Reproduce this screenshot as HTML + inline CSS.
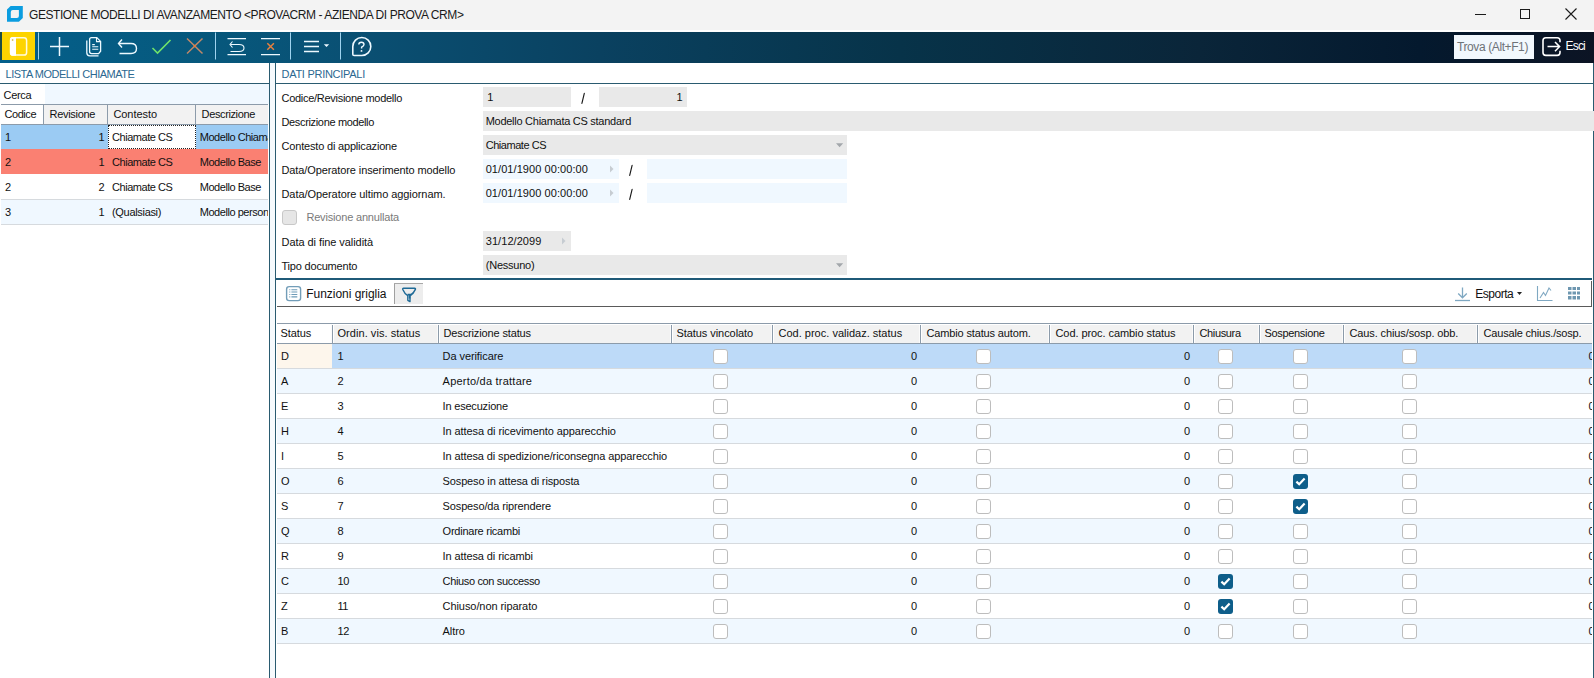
<!DOCTYPE html>
<html><head><meta charset="utf-8">
<style>
*{box-sizing:border-box;margin:0;padding:0}
html,body{width:1594px;height:678px;overflow:hidden;background:#fff;font-family:"Liberation Sans",sans-serif;font-size:11px;color:#111}
body{position:relative}
.a{position:absolute;white-space:nowrap}
.cb{position:absolute;width:15px;height:15px;border:1px solid #bdbdbd;border-radius:3px;background:#fff}
</style></head><body>
<div class="a" style="left:0;top:0;width:1594px;height:30px;background:#f3f3f3"></div>
<div class="a" style="left:0;top:30px;width:1594px;height:2px;background:#fff"></div>
<svg class="a" style="left:0;top:0" width="40" height="30" viewBox="0 0 40 30">
<path d="M10.6 6H22.8V17.9L18.9 21.8H7V9.6Z" fill="#0b9de0"/>
<path d="M12.8 10H18.9V15.9Q18.9 17.9 16.9 17.9H10.8V12Q10.8 10 12.8 10Z" fill="#f3f3f3"/></svg>
<div class="a" style="left:1475px;top:14px;width:11px;height:1px;background:#1a1a1a"></div>
<div class="a" style="left:1520px;top:9px;width:10px;height:10px;border:1px solid #1a1a1a"></div>
<svg class="a" style="left:1565px;top:8px" width="12" height="12" viewBox="0 0 12 12"><path d="M0.5 0.5L11.5 11.5M11.5 0.5L0.5 11.5" stroke="#1a1a1a" stroke-width="1.1"/></svg>
<div class="a" style="left:0;top:32px;width:1594px;height:31px;background:linear-gradient(90deg,#045f8b 0px,#065a7f 170px,#0a4f72 370px,#0a4160 600px,#073349 900px,#0a2539 1200px,#04192e 1420px,#0c1424 1594px)"></div>
<div class="a" style="left:0;top:32px;width:2px;height:28px;background:#1d4c46"></div>
<div class="a" style="left:2px;top:32px;width:32.6px;height:28px;background:#fdd400"></div>
<svg class="a" style="left:0;top:0" width="1594" height="70" viewBox="0 0 1594 70">
 <rect x="10.6" y="37.8" width="16" height="17.2" rx="2.6" fill="none" stroke="#fffbe0" stroke-width="1.5"/>
 <path d="M16 37.1V55.7H12.5Q9.9 55.7 9.9 53.1V39.7Q9.9 37.1 12.5 37.1Z" fill="#fff"/>
 <circle cx="12.6" cy="40" r="0.9" fill="#d8c060"/>
 <rect x="38" y="32.5" width="1" height="27" fill="#9fd3ef"/>
 <rect x="215" y="32.5" width="1" height="27" fill="#9fd3ef"/>
 <rect x="290" y="32.5" width="1" height="27" fill="#9fd3ef"/>
 <rect x="340" y="32.5" width="1" height="27" fill="#9fd3ef"/>
 <path d="M50 46.5H69M59.5 37V56" stroke="#eef9ff" stroke-width="1.5"/>
 <path d="M86.8 40.5V52.8Q86.8 55.8 89.8 55.8H98.5" fill="none" stroke="#eef9ff" stroke-width="1.3"/>
 <path d="M91.5 37.6H96.8L100.6 41.4V51.2L98.6 53.6H91.6Q89.6 53.6 89.6 51.6V39.6Q89.6 37.6 91.5 37.6Z" fill="none" stroke="#eef9ff" stroke-width="1.3"/>
 <path d="M96.5 37.8V41.6H100.4" fill="none" stroke="#eef9ff" stroke-width="1.1"/>
 <path d="M92.2 44.6H94.8M92.2 46.8H98.3M92.2 49.2H98.3" stroke="#eef9ff" stroke-width="1.1"/>
 <path d="M122 39.5L118.5 43.5L122 47.5" fill="none" stroke="#eef9ff" stroke-width="1.4"/>
 <path d="M119 43.5H131Q136.5 43.5 136.5 48.5Q136.5 53.5 131 53.5H119.5" fill="none" stroke="#eef9ff" stroke-width="1.4"/>
 <path d="M152.5 48L157.5 53L170.5 40" fill="none" stroke="#6fe36a" stroke-width="1.6"/>
 <path d="M187 38.5L202.5 53.5M202.5 38.5L187 53.5" stroke="#c08868" stroke-width="1.5"/>
 <circle cx="194.8" cy="46" r="1.2" fill="#e87a3a"/>
 <path d="M227.5 38.6H246M227.5 54.6H246" stroke="#eef9ff" stroke-width="1.4"/>
 <path d="M232.5 41.5L230 44.5L232.5 47.5" fill="none" stroke="#eef9ff" stroke-width="1.1"/>
 <path d="M230.5 44.5H239Q244 44.5 244 48Q244 51.5 239 51.5H230.5" fill="none" stroke="#eef9ff" stroke-width="1.1"/>
 <path d="M261 38.6H280M261 54.6H280" stroke="#eef9ff" stroke-width="1.4"/>
 <path d="M267.3 43.2L273.9 49.8M273.9 43.2L267.3 49.8" stroke="#e8803e" stroke-width="1.5"/>
 <path d="M304 41.5H319M304 46.5H319M304 51.5H319" stroke="#eef9ff" stroke-width="1.3"/>
 <path d="M323.8 44.2H329.2L326.5 47Z" fill="#eef9ff"/>
 <path d="M352.8 54.2V46.5A9 9 0 1 1 361.8 55.5H354.1Q352.8 55.5 352.8 54.2Z" fill="none" stroke="#eef9ff" stroke-width="1.6"/>
 <path d="M358.8 44.6Q358.8 42.2 361.4 42.2Q364 42.2 364 44.6Q364 46 361.6 47.2V48.6" fill="none" stroke="#eef9ff" stroke-width="1.4"/>
 <circle cx="361.5" cy="50.9" r="0.95" fill="#eef9ff"/>
 <path d="M1560 42.3V40.6Q1560 37.8 1557.2 37.8H1545.8Q1543 37.8 1543 40.6V52.6Q1543 55.4 1545.8 55.4H1557.2Q1560 55.4 1560 52.6V50.8" fill="none" stroke="#fff" stroke-width="1.6"/>
 <path d="M1547.5 46.6H1559.5M1555 42L1559.6 46.6L1555 51.2" fill="none" stroke="#fff" stroke-width="1.5"/>
</svg>
<div class="a" style="left:1454px;top:35px;width:80px;height:24px;background:#f2f8fd"></div>
<div class="a" style="left:269px;top:63px;width:1px;height:615px;background:#2a5b70"></div>
<div class="a" style="left:270px;top:63px;width:5px;height:615px;background:#f6fafd"></div>
<div class="a" style="left:275px;top:63px;width:1px;height:615px;background:#2a5b70"></div>
<div class="a" style="left:1593px;top:63px;width:1px;height:615px;background:#2a5b70"></div>
<div class="a" style="left:0;top:83px;width:269px;height:1px;background:#2a5b70"></div>
<div class="a" style="left:45px;top:84px;width:224px;height:20px;background:#f0f8ff"></div>
<div class="a" style="left:1px;top:104px;width:267px;height:1px;background:#8c9baa"></div>
<div class="a" style="left:44px;top:105px;width:224px;height:19px;background:#f2f2f2"></div>
<div class="a" style="left:43px;top:105px;width:1px;height:19px;background:#8c9baa"></div>
<div class="a" style="left:107px;top:105px;width:1px;height:19px;background:#8c9baa"></div>
<div class="a" style="left:195px;top:105px;width:1px;height:19px;background:#8c9baa"></div>
<div class="a" style="left:1px;top:124px;width:267px;height:1px;background:#8c9baa"></div>
<div class="a" style="left:1px;top:125px;width:267px;height:24px;background:#9bcbf3"></div>
<div class="a" style="left:108px;top:125px;width:88px;height:24px;background:#fff;border:1px dotted #222"></div>
<div class="a" style="left:1px;top:149px;width:267px;height:25px;background:#fa8072"></div>
<div class="a" style="left:1px;top:199px;width:267px;height:25px;background:#f0f8ff"></div>
<div class="a" style="left:1px;top:199px;width:267px;height:1px;background:#d6dade"></div>
<div class="a" style="left:1px;top:224px;width:267px;height:1px;background:#d6dade"></div>
<div class="a" style="left:276px;top:83px;width:1318px;height:1px;background:#2a5b70"></div>
<div class="a" style="left:282px;top:210px;width:15px;height:15px;border:1px solid #c8c8c8;border-radius:3px;background:#e6e6e6"></div>
<div class="a" style="left:483px;top:87px;width:88px;height:20px;background:#e9e9e9"></div>
<div class="a" style="left:599px;top:87px;width:88px;height:20px;background:#e9e9e9"></div>
<div class="a" style="left:483px;top:111px;width:1111px;height:20px;background:#e9e9e9"></div>
<div class="a" style="left:483px;top:135px;width:364px;height:20px;background:#e9e9e9"></div>
<div class="a" style="left:483px;top:159px;width:136px;height:20px;background:#f0f8ff"></div>
<div class="a" style="left:647px;top:159px;width:200px;height:20px;background:#f0f8ff"></div>
<div class="a" style="left:483px;top:183px;width:136px;height:20px;background:#f0f8ff"></div>
<div class="a" style="left:647px;top:183px;width:200px;height:20px;background:#f0f8ff"></div>
<div class="a" style="left:483px;top:231px;width:88px;height:20px;background:#e9e9e9"></div>
<div class="a" style="left:483px;top:255px;width:364px;height:20px;background:#e9e9e9"></div>
<svg class="a" style="left:0;top:0" width="1594" height="300" viewBox="0 0 1594 300">
 <path d="M581.9 103.4L584.3 93.3M629.7 175.4L632.1 165.3M629.7 199.4L632.1 189.3" stroke="#1a1a1a" stroke-width="1.15" stroke-linecap="round"/>
 <path d="M610 165.5L613.5 169L610 172.5Z" fill="#c6ccd2"/>
 <path d="M610 189.5L613.5 193L610 196.5Z" fill="#c6ccd2"/>
 <path d="M562 237.5L565.5 241L562 244.5Z" fill="#c6ccd2"/>
 <path d="M836 143.3H843.2L839.6 147.2Z" fill="#a3a7ab"/>
 <path d="M836 263.3H843.2L839.6 267.2Z" fill="#a3a7ab"/>
</svg>
<div class="a" style="left:276px;top:278px;width:1316px;height:2px;background:#1f5a78"></div>
<svg class="a" style="left:0;top:0" width="1594" height="678" viewBox="0 0 1594 678">
 <rect x="286.6" y="286.6" width="14" height="14" rx="2.6" fill="#fff" stroke="#729db8" stroke-width="1.4"/>
 <path d="M289.3 289.7H290.3M289.3 292H290.3M289.3 294.5H290.3M289.3 296.9H290.3M291.4 289.7H297.3M291.4 292H297.3M291.4 294.5H297.3M291.4 296.9H297.3" stroke="#6f9cb8" stroke-width="1.1"/>
 <rect x="394" y="283" width="29" height="21" fill="#ededed"/>
 <rect x="394" y="283" width="1" height="21" fill="#a0a0a0"/>
 <rect x="394" y="283" width="29" height="1" fill="#a8a8a8"/>
 <path d="M403.5 288.2Q402.4 288.2 402.8 289.4Q404.5 293.6 407.8 295.6V300.3L410 301.6V295.6Q413.6 293.6 415.4 289.4Q415.8 288.2 414.7 288.2Z" fill="none" stroke="#1f6a96" stroke-width="1.4" stroke-linejoin="round"/>
 <path d="M407.6 294.6H411.6M409.6 294.6V298.6" stroke="#1f6a96" stroke-width="1.6"/>
 <path d="M1462.5 287.5V297.5M1458.2 293.5L1462.5 297.8L1466.8 293.5" fill="none" stroke="#7fa8c2" stroke-width="1.3"/>
 <path d="M1455 300.5H1470" stroke="#7fa8c2" stroke-width="1.3"/>
 <path d="M1517 292H1522L1519.5 295Z" fill="#222"/>
 <path d="M1537.5 286V300.5H1552.5" fill="none" stroke="#7fa8c2" stroke-width="1.1"/>
 <path d="M1540 298L1543.5 292.5L1545.5 295.5L1549 288L1551 290.5" fill="none" stroke="#7fa8c2" stroke-width="1.1"/>
 <path d="M1568 287h3.5v3h-3.5zM1572.5 287h3.5v3h-3.5zM1577 287h3v3h-3zM1568 291.5h3.5v3h-3.5zM1572.5 291.5h3.5v3h-3.5zM1577 291.5h3v3h-3zM1568 296h3.5v3.5h-3.5zM1572.5 296h3.5v3.5h-3.5zM1577 296h3v3.5h-3z" fill="#6e97b0"/>
</svg>
<div class="a" style="left:277px;top:306px;width:1315px;height:1px;background:#5a5a5a"></div>
<div class="a" style="left:1591px;top:281px;width:1px;height:26px;background:#5a5a5a"></div>
<div class="a" style="left:277px;top:323px;width:1315px;height:1px;background:#8c9baa"></div>
<div class="a" style="left:332px;top:324px;width:1260px;height:19px;background:#f2f2f2"></div>
<div class="a" style="left:277px;top:343px;width:1315px;height:1px;background:#8c9baa"></div>
<div class="a" style="left:332px;top:324px;width:1px;height:19px;background:#8c9baa"></div>
<div class="a" style="left:333px;top:324px;width:1px;height:19px;background:#fff"></div>
<div class="a" style="left:331px;top:324px;width:1px;height:19px;background:#fbfbfb"></div>
<div class="a" style="left:438px;top:324px;width:1px;height:19px;background:#8c9baa"></div>
<div class="a" style="left:439px;top:324px;width:1px;height:19px;background:#fff"></div>
<div class="a" style="left:437px;top:324px;width:1px;height:19px;background:#fbfbfb"></div>
<div class="a" style="left:671px;top:324px;width:1px;height:19px;background:#8c9baa"></div>
<div class="a" style="left:672px;top:324px;width:1px;height:19px;background:#fff"></div>
<div class="a" style="left:670px;top:324px;width:1px;height:19px;background:#fbfbfb"></div>
<div class="a" style="left:772px;top:324px;width:1px;height:19px;background:#8c9baa"></div>
<div class="a" style="left:773px;top:324px;width:1px;height:19px;background:#fff"></div>
<div class="a" style="left:771px;top:324px;width:1px;height:19px;background:#fbfbfb"></div>
<div class="a" style="left:920px;top:324px;width:1px;height:19px;background:#8c9baa"></div>
<div class="a" style="left:921px;top:324px;width:1px;height:19px;background:#fff"></div>
<div class="a" style="left:919px;top:324px;width:1px;height:19px;background:#fbfbfb"></div>
<div class="a" style="left:1049px;top:324px;width:1px;height:19px;background:#8c9baa"></div>
<div class="a" style="left:1050px;top:324px;width:1px;height:19px;background:#fff"></div>
<div class="a" style="left:1048px;top:324px;width:1px;height:19px;background:#fbfbfb"></div>
<div class="a" style="left:1193px;top:324px;width:1px;height:19px;background:#8c9baa"></div>
<div class="a" style="left:1194px;top:324px;width:1px;height:19px;background:#fff"></div>
<div class="a" style="left:1192px;top:324px;width:1px;height:19px;background:#fbfbfb"></div>
<div class="a" style="left:1259px;top:324px;width:1px;height:19px;background:#8c9baa"></div>
<div class="a" style="left:1260px;top:324px;width:1px;height:19px;background:#fff"></div>
<div class="a" style="left:1258px;top:324px;width:1px;height:19px;background:#fbfbfb"></div>
<div class="a" style="left:1343px;top:324px;width:1px;height:19px;background:#8c9baa"></div>
<div class="a" style="left:1344px;top:324px;width:1px;height:19px;background:#fff"></div>
<div class="a" style="left:1342px;top:324px;width:1px;height:19px;background:#fbfbfb"></div>
<div class="a" style="left:1477px;top:324px;width:1px;height:19px;background:#8c9baa"></div>
<div class="a" style="left:1478px;top:324px;width:1px;height:19px;background:#fff"></div>
<div class="a" style="left:1476px;top:324px;width:1px;height:19px;background:#fbfbfb"></div>
<div class="a" style="left:332px;top:324px;width:1260px;height:1px;background:#fff"></div>
<div class="a" style="left:277px;top:344px;width:55px;height:24px;background:#fdf6ec"></div>
<div class="a" style="left:332px;top:344px;width:1260px;height:24px;background:#bddaf8"></div>
<div class="a" style="left:277px;top:368px;width:1315px;height:1px;background:#d6dade"></div>
<div class="cb" style="left:713px;top:349px"></div>
<div class="cb" style="left:976px;top:349px"></div>
<div class="cb" style="left:1218px;top:349px"></div>
<div class="cb" style="left:1293px;top:349px"></div>
<div class="cb" style="left:1402px;top:349px"></div>
<div class="a" style="left:277px;top:369px;width:1315px;height:24px;background:#f0f8ff"></div>
<div class="a" style="left:277px;top:393px;width:1315px;height:1px;background:#d6dade"></div>
<div class="cb" style="left:713px;top:374px"></div>
<div class="cb" style="left:976px;top:374px"></div>
<div class="cb" style="left:1218px;top:374px"></div>
<div class="cb" style="left:1293px;top:374px"></div>
<div class="cb" style="left:1402px;top:374px"></div>
<div class="a" style="left:277px;top:418px;width:1315px;height:1px;background:#d6dade"></div>
<div class="cb" style="left:713px;top:399px"></div>
<div class="cb" style="left:976px;top:399px"></div>
<div class="cb" style="left:1218px;top:399px"></div>
<div class="cb" style="left:1293px;top:399px"></div>
<div class="cb" style="left:1402px;top:399px"></div>
<div class="a" style="left:277px;top:419px;width:1315px;height:24px;background:#f0f8ff"></div>
<div class="a" style="left:277px;top:443px;width:1315px;height:1px;background:#d6dade"></div>
<div class="cb" style="left:713px;top:424px"></div>
<div class="cb" style="left:976px;top:424px"></div>
<div class="cb" style="left:1218px;top:424px"></div>
<div class="cb" style="left:1293px;top:424px"></div>
<div class="cb" style="left:1402px;top:424px"></div>
<div class="a" style="left:277px;top:468px;width:1315px;height:1px;background:#d6dade"></div>
<div class="cb" style="left:713px;top:449px"></div>
<div class="cb" style="left:976px;top:449px"></div>
<div class="cb" style="left:1218px;top:449px"></div>
<div class="cb" style="left:1293px;top:449px"></div>
<div class="cb" style="left:1402px;top:449px"></div>
<div class="a" style="left:277px;top:469px;width:1315px;height:24px;background:#f0f8ff"></div>
<div class="a" style="left:277px;top:493px;width:1315px;height:1px;background:#d6dade"></div>
<div class="cb" style="left:713px;top:474px"></div>
<div class="cb" style="left:976px;top:474px"></div>
<div class="cb" style="left:1218px;top:474px"></div>
<svg class="a" style="left:1293px;top:474px" width="15" height="15" viewBox="0 0 15 15"><rect x="0" y="0" width="15" height="15" rx="3" fill="#0e5e8a"/><path d="M3.4 7.6L6.2 10.3L11.6 4.6" fill="none" stroke="#fff" stroke-width="2.2"/></svg>
<div class="cb" style="left:1402px;top:474px"></div>
<div class="a" style="left:277px;top:518px;width:1315px;height:1px;background:#d6dade"></div>
<div class="cb" style="left:713px;top:499px"></div>
<div class="cb" style="left:976px;top:499px"></div>
<div class="cb" style="left:1218px;top:499px"></div>
<svg class="a" style="left:1293px;top:499px" width="15" height="15" viewBox="0 0 15 15"><rect x="0" y="0" width="15" height="15" rx="3" fill="#0e5e8a"/><path d="M3.4 7.6L6.2 10.3L11.6 4.6" fill="none" stroke="#fff" stroke-width="2.2"/></svg>
<div class="cb" style="left:1402px;top:499px"></div>
<div class="a" style="left:277px;top:519px;width:1315px;height:24px;background:#f0f8ff"></div>
<div class="a" style="left:277px;top:543px;width:1315px;height:1px;background:#d6dade"></div>
<div class="cb" style="left:713px;top:524px"></div>
<div class="cb" style="left:976px;top:524px"></div>
<div class="cb" style="left:1218px;top:524px"></div>
<div class="cb" style="left:1293px;top:524px"></div>
<div class="cb" style="left:1402px;top:524px"></div>
<div class="a" style="left:277px;top:568px;width:1315px;height:1px;background:#d6dade"></div>
<div class="cb" style="left:713px;top:549px"></div>
<div class="cb" style="left:976px;top:549px"></div>
<div class="cb" style="left:1218px;top:549px"></div>
<div class="cb" style="left:1293px;top:549px"></div>
<div class="cb" style="left:1402px;top:549px"></div>
<div class="a" style="left:277px;top:569px;width:1315px;height:24px;background:#f0f8ff"></div>
<div class="a" style="left:277px;top:593px;width:1315px;height:1px;background:#d6dade"></div>
<div class="cb" style="left:713px;top:574px"></div>
<div class="cb" style="left:976px;top:574px"></div>
<svg class="a" style="left:1218px;top:574px" width="15" height="15" viewBox="0 0 15 15"><rect x="0" y="0" width="15" height="15" rx="3" fill="#0e5e8a"/><path d="M3.4 7.6L6.2 10.3L11.6 4.6" fill="none" stroke="#fff" stroke-width="2.2"/></svg>
<div class="cb" style="left:1293px;top:574px"></div>
<div class="cb" style="left:1402px;top:574px"></div>
<div class="a" style="left:277px;top:618px;width:1315px;height:1px;background:#d6dade"></div>
<div class="cb" style="left:713px;top:599px"></div>
<div class="cb" style="left:976px;top:599px"></div>
<svg class="a" style="left:1218px;top:599px" width="15" height="15" viewBox="0 0 15 15"><rect x="0" y="0" width="15" height="15" rx="3" fill="#0e5e8a"/><path d="M3.4 7.6L6.2 10.3L11.6 4.6" fill="none" stroke="#fff" stroke-width="2.2"/></svg>
<div class="cb" style="left:1293px;top:599px"></div>
<div class="cb" style="left:1402px;top:599px"></div>
<div class="a" style="left:277px;top:619px;width:1315px;height:24px;background:#f0f8ff"></div>
<div class="a" style="left:277px;top:643px;width:1315px;height:1px;background:#d6dade"></div>
<div class="cb" style="left:713px;top:624px"></div>
<div class="cb" style="left:976px;top:624px"></div>
<div class="cb" style="left:1218px;top:624px"></div>
<div class="cb" style="left:1293px;top:624px"></div>
<div class="cb" style="left:1402px;top:624px"></div>
<div class="a" style="left:29.00px;top:7.84px;font-size:12px;line-height:14px;letter-spacing:-0.428px;color:#1a1a1a">GESTIONE MODELLI DI AVANZAMENTO &lt;PROVACRM - AZIENDA DI PROVA CRM&gt;</div>
<div class="a" style="left:1457.00px;top:39.84px;font-size:12px;line-height:14px;letter-spacing:-0.398px;color:#6e7378">Trova (Alt+F1)</div>
<div class="a" style="left:1565.50px;top:39.34px;font-size:12px;line-height:14px;letter-spacing:-0.793px;color:#fff">Esci</div>
<div class="a" style="left:5.50px;top:67.69px;font-size:11px;line-height:13px;letter-spacing:-0.485px;color:#2c6891">LISTA MODELLI CHIAMATE</div>
<div class="a" style="left:3.60px;top:88.69px;font-size:11px;line-height:13px;letter-spacing:-0.349px;color:#111">Cerca</div>
<div class="a" style="left:4.50px;top:107.69px;font-size:11px;line-height:13px;letter-spacing:-0.442px;color:#111">Codice</div>
<div class="a" style="left:49.60px;top:107.69px;font-size:11px;line-height:13px;letter-spacing:-0.312px;color:#111">Revisione</div>
<div class="a" style="left:113.40px;top:107.69px;font-size:11px;line-height:13px;letter-spacing:-0.041px;color:#111">Contesto</div>
<div class="a" style="left:201.60px;top:107.69px;font-size:11px;line-height:13px;letter-spacing:-0.379px;color:#111">Descrizione</div>
<div class="a" style="left:5.00px;top:130.69px;font-size:11px;line-height:13px;letter-spacing:-0.200px;color:#111">1</div>
<div class="a" style="left:98.58px;top:130.69px;font-size:11px;line-height:13px;letter-spacing:-0.200px;color:#111">1</div>
<div class="a" style="left:112.00px;top:130.69px;font-size:11px;line-height:13px;letter-spacing:-0.457px;color:#111">Chiamate CS</div>
<div class="a" style="left:0;top:130.69px;width:268px;height:13px;overflow:hidden"><div class="a" style="left:199.70px;top:0;font-size:11px;line-height:13px;letter-spacing:-0.450px;color:#111">Modello Chiamata CS standard</div></div>
<div class="a" style="left:5.00px;top:155.69px;font-size:11px;line-height:13px;letter-spacing:-0.200px;color:#111">2</div>
<div class="a" style="left:98.58px;top:155.69px;font-size:11px;line-height:13px;letter-spacing:-0.200px;color:#111">1</div>
<div class="a" style="left:112.00px;top:155.69px;font-size:11px;line-height:13px;letter-spacing:-0.457px;color:#111">Chiamate CS</div>
<div class="a" style="left:0;top:155.69px;width:268px;height:13px;overflow:hidden"><div class="a" style="left:199.70px;top:0;font-size:11px;line-height:13px;letter-spacing:-0.450px;color:#111">Modello Base</div></div>
<div class="a" style="left:5.00px;top:180.69px;font-size:11px;line-height:13px;letter-spacing:-0.200px;color:#111">2</div>
<div class="a" style="left:98.58px;top:180.69px;font-size:11px;line-height:13px;letter-spacing:-0.200px;color:#111">2</div>
<div class="a" style="left:112.00px;top:180.69px;font-size:11px;line-height:13px;letter-spacing:-0.457px;color:#111">Chiamate CS</div>
<div class="a" style="left:0;top:180.69px;width:268px;height:13px;overflow:hidden"><div class="a" style="left:199.70px;top:0;font-size:11px;line-height:13px;letter-spacing:-0.450px;color:#111">Modello Base</div></div>
<div class="a" style="left:5.00px;top:205.69px;font-size:11px;line-height:13px;letter-spacing:-0.200px;color:#111">3</div>
<div class="a" style="left:98.58px;top:205.69px;font-size:11px;line-height:13px;letter-spacing:-0.200px;color:#111">1</div>
<div class="a" style="left:112.00px;top:205.69px;font-size:11px;line-height:13px;letter-spacing:-0.316px;color:#111">(Qualsiasi)</div>
<div class="a" style="left:0;top:205.69px;width:268px;height:13px;overflow:hidden"><div class="a" style="left:199.70px;top:0;font-size:11px;line-height:13px;letter-spacing:-0.450px;color:#111">Modello personalizzato</div></div>
<div class="a" style="left:281.50px;top:67.69px;font-size:11px;line-height:13px;letter-spacing:-0.274px;color:#2c6891">DATI PRINCIPALI</div>
<div class="a" style="left:281.50px;top:91.69px;font-size:11px;line-height:13px;letter-spacing:-0.279px;color:#111">Codice/Revisione modello</div>
<div class="a" style="left:281.50px;top:115.69px;font-size:11px;line-height:13px;letter-spacing:-0.345px;color:#111">Descrizione modello</div>
<div class="a" style="left:281.50px;top:139.69px;font-size:11px;line-height:13px;letter-spacing:-0.182px;color:#111">Contesto di applicazione</div>
<div class="a" style="left:281.50px;top:163.69px;font-size:11px;line-height:13px;letter-spacing:-0.103px;color:#111">Data/Operatore inserimento modello</div>
<div class="a" style="left:281.50px;top:187.69px;font-size:11px;line-height:13px;letter-spacing:-0.072px;color:#111">Data/Operatore ultimo aggiornam.</div>
<div class="a" style="left:281.50px;top:235.69px;font-size:11px;line-height:13px;letter-spacing:-0.064px;color:#111">Data di fine validità</div>
<div class="a" style="left:281.50px;top:259.69px;font-size:11px;line-height:13px;letter-spacing:-0.199px;color:#111">Tipo documento</div>
<div class="a" style="left:306.40px;top:210.69px;font-size:11px;line-height:13px;letter-spacing:-0.180px;color:#7a7a7a">Revisione annullata</div>
<div class="a" style="left:487.30px;top:90.69px;font-size:11px;line-height:13px;letter-spacing:0.000px;color:#111">1</div>
<div class="a" style="left:676.38px;top:90.69px;font-size:11px;line-height:13px;letter-spacing:0.000px;color:#111">1</div>
<div class="a" style="left:485.70px;top:114.69px;font-size:11px;line-height:13px;letter-spacing:-0.270px;color:#111">Modello Chiamata CS standard</div>
<div class="a" style="left:485.70px;top:138.69px;font-size:11px;line-height:13px;letter-spacing:-0.457px;color:#111">Chiamate CS</div>
<div class="a" style="left:485.70px;top:162.69px;font-size:11px;line-height:13px;letter-spacing:0.066px;color:#111">01/01/1900 00:00:00</div>
<div class="a" style="left:485.70px;top:186.69px;font-size:11px;line-height:13px;letter-spacing:0.066px;color:#111">01/01/1900 00:00:00</div>
<div class="a" style="left:485.80px;top:234.69px;font-size:11px;line-height:13px;letter-spacing:0.044px;color:#111">31/12/2099</div>
<div class="a" style="left:485.80px;top:258.69px;font-size:11px;line-height:13px;letter-spacing:-0.239px;color:#111">(Nessuno)</div>
<div class="a" style="left:306.20px;top:286.84px;font-size:12px;line-height:14px;letter-spacing:-0.026px;color:#111">Funzioni griglia</div>
<div class="a" style="left:1475.30px;top:286.84px;font-size:12px;line-height:14px;letter-spacing:-0.480px;color:#111">Esporta</div>
<div class="a" style="left:280.50px;top:326.69px;font-size:11px;line-height:13px;letter-spacing:-0.098px;color:#111">Status</div>
<div class="a" style="left:337.50px;top:326.69px;font-size:11px;line-height:13px;letter-spacing:0.049px;color:#111">Ordin. vis. status</div>
<div class="a" style="left:443.50px;top:326.69px;font-size:11px;line-height:13px;letter-spacing:-0.137px;color:#111">Descrizione status</div>
<div class="a" style="left:676.50px;top:326.69px;font-size:11px;line-height:13px;letter-spacing:-0.066px;color:#111">Status vincolato</div>
<div class="a" style="left:778.50px;top:326.69px;font-size:11px;line-height:13px;letter-spacing:0.007px;color:#111">Cod. proc. validaz. status</div>
<div class="a" style="left:926.50px;top:326.69px;font-size:11px;line-height:13px;letter-spacing:-0.145px;color:#111">Cambio status autom.</div>
<div class="a" style="left:1055.50px;top:326.69px;font-size:11px;line-height:13px;letter-spacing:-0.074px;color:#111">Cod. proc. cambio status</div>
<div class="a" style="left:1199.50px;top:326.69px;font-size:11px;line-height:13px;letter-spacing:-0.354px;color:#111">Chiusura</div>
<div class="a" style="left:1264.50px;top:326.69px;font-size:11px;line-height:13px;letter-spacing:-0.328px;color:#111">Sospensione</div>
<div class="a" style="left:1349.50px;top:326.69px;font-size:11px;line-height:13px;letter-spacing:-0.113px;color:#111">Caus. chius/sosp. obb.</div>
<div class="a" style="left:1483.50px;top:326.69px;font-size:11px;line-height:13px;letter-spacing:-0.180px;color:#111">Causale chius./sosp.</div>
<div class="a" style="left:281.00px;top:349.69px;font-size:11px;line-height:13px;letter-spacing:0.000px;color:#111">D</div>
<div class="a" style="left:337.50px;top:349.69px;font-size:11px;line-height:13px;letter-spacing:0.000px;color:#111">1</div>
<div class="a" style="left:442.60px;top:349.69px;font-size:11px;line-height:13px;letter-spacing:-0.081px;color:#111">Da verificare</div>
<div class="a" style="left:910.88px;top:349.69px;font-size:11px;line-height:13px;letter-spacing:0.000px;color:#111">0</div>
<div class="a" style="left:1183.88px;top:349.69px;font-size:11px;line-height:13px;letter-spacing:0.000px;color:#111">0</div>
<div class="a" style="left:1580px;top:349.69px;width:12px;height:13px;overflow:hidden"><div class="a" style="left:8.50px;top:0;font-size:11px;line-height:13px;color:#111">0</div></div>
<div class="a" style="left:281.00px;top:374.69px;font-size:11px;line-height:13px;letter-spacing:0.000px;color:#111">A</div>
<div class="a" style="left:337.50px;top:374.69px;font-size:11px;line-height:13px;letter-spacing:0.000px;color:#111">2</div>
<div class="a" style="left:442.60px;top:374.69px;font-size:11px;line-height:13px;letter-spacing:0.222px;color:#111">Aperto/da trattare</div>
<div class="a" style="left:910.88px;top:374.69px;font-size:11px;line-height:13px;letter-spacing:0.000px;color:#111">0</div>
<div class="a" style="left:1183.88px;top:374.69px;font-size:11px;line-height:13px;letter-spacing:0.000px;color:#111">0</div>
<div class="a" style="left:1580px;top:374.69px;width:12px;height:13px;overflow:hidden"><div class="a" style="left:8.50px;top:0;font-size:11px;line-height:13px;color:#111">0</div></div>
<div class="a" style="left:281.00px;top:399.69px;font-size:11px;line-height:13px;letter-spacing:0.000px;color:#111">E</div>
<div class="a" style="left:337.50px;top:399.69px;font-size:11px;line-height:13px;letter-spacing:0.000px;color:#111">3</div>
<div class="a" style="left:442.60px;top:399.69px;font-size:11px;line-height:13px;letter-spacing:-0.199px;color:#111">In esecuzione</div>
<div class="a" style="left:910.88px;top:399.69px;font-size:11px;line-height:13px;letter-spacing:0.000px;color:#111">0</div>
<div class="a" style="left:1183.88px;top:399.69px;font-size:11px;line-height:13px;letter-spacing:0.000px;color:#111">0</div>
<div class="a" style="left:1580px;top:399.69px;width:12px;height:13px;overflow:hidden"><div class="a" style="left:8.50px;top:0;font-size:11px;line-height:13px;color:#111">0</div></div>
<div class="a" style="left:281.00px;top:424.69px;font-size:11px;line-height:13px;letter-spacing:0.000px;color:#111">H</div>
<div class="a" style="left:337.50px;top:424.69px;font-size:11px;line-height:13px;letter-spacing:0.000px;color:#111">4</div>
<div class="a" style="left:442.60px;top:424.69px;font-size:11px;line-height:13px;letter-spacing:-0.081px;color:#111">In attesa di ricevimento apparecchio</div>
<div class="a" style="left:910.88px;top:424.69px;font-size:11px;line-height:13px;letter-spacing:0.000px;color:#111">0</div>
<div class="a" style="left:1183.88px;top:424.69px;font-size:11px;line-height:13px;letter-spacing:0.000px;color:#111">0</div>
<div class="a" style="left:1580px;top:424.69px;width:12px;height:13px;overflow:hidden"><div class="a" style="left:8.50px;top:0;font-size:11px;line-height:13px;color:#111">0</div></div>
<div class="a" style="left:281.00px;top:449.69px;font-size:11px;line-height:13px;letter-spacing:0.000px;color:#111">I</div>
<div class="a" style="left:337.50px;top:449.69px;font-size:11px;line-height:13px;letter-spacing:0.000px;color:#111">5</div>
<div class="a" style="left:442.60px;top:449.69px;font-size:11px;line-height:13px;letter-spacing:-0.105px;color:#111">In attesa di spedizione/riconsegna apparecchio</div>
<div class="a" style="left:910.88px;top:449.69px;font-size:11px;line-height:13px;letter-spacing:0.000px;color:#111">0</div>
<div class="a" style="left:1183.88px;top:449.69px;font-size:11px;line-height:13px;letter-spacing:0.000px;color:#111">0</div>
<div class="a" style="left:1580px;top:449.69px;width:12px;height:13px;overflow:hidden"><div class="a" style="left:8.50px;top:0;font-size:11px;line-height:13px;color:#111">0</div></div>
<div class="a" style="left:281.00px;top:474.69px;font-size:11px;line-height:13px;letter-spacing:0.000px;color:#111">O</div>
<div class="a" style="left:337.50px;top:474.69px;font-size:11px;line-height:13px;letter-spacing:0.000px;color:#111">6</div>
<div class="a" style="left:442.60px;top:474.69px;font-size:11px;line-height:13px;letter-spacing:-0.136px;color:#111">Sospeso in attesa di risposta</div>
<div class="a" style="left:910.88px;top:474.69px;font-size:11px;line-height:13px;letter-spacing:0.000px;color:#111">0</div>
<div class="a" style="left:1183.88px;top:474.69px;font-size:11px;line-height:13px;letter-spacing:0.000px;color:#111">0</div>
<div class="a" style="left:1580px;top:474.69px;width:12px;height:13px;overflow:hidden"><div class="a" style="left:8.50px;top:0;font-size:11px;line-height:13px;color:#111">0</div></div>
<div class="a" style="left:281.00px;top:499.69px;font-size:11px;line-height:13px;letter-spacing:0.000px;color:#111">S</div>
<div class="a" style="left:337.50px;top:499.69px;font-size:11px;line-height:13px;letter-spacing:0.000px;color:#111">7</div>
<div class="a" style="left:442.60px;top:499.69px;font-size:11px;line-height:13px;letter-spacing:-0.138px;color:#111">Sospeso/da riprendere</div>
<div class="a" style="left:910.88px;top:499.69px;font-size:11px;line-height:13px;letter-spacing:0.000px;color:#111">0</div>
<div class="a" style="left:1183.88px;top:499.69px;font-size:11px;line-height:13px;letter-spacing:0.000px;color:#111">0</div>
<div class="a" style="left:1580px;top:499.69px;width:12px;height:13px;overflow:hidden"><div class="a" style="left:8.50px;top:0;font-size:11px;line-height:13px;color:#111">0</div></div>
<div class="a" style="left:281.00px;top:524.69px;font-size:11px;line-height:13px;letter-spacing:0.000px;color:#111">Q</div>
<div class="a" style="left:337.50px;top:524.69px;font-size:11px;line-height:13px;letter-spacing:0.000px;color:#111">8</div>
<div class="a" style="left:442.60px;top:524.69px;font-size:11px;line-height:13px;letter-spacing:-0.245px;color:#111">Ordinare ricambi</div>
<div class="a" style="left:910.88px;top:524.69px;font-size:11px;line-height:13px;letter-spacing:0.000px;color:#111">0</div>
<div class="a" style="left:1183.88px;top:524.69px;font-size:11px;line-height:13px;letter-spacing:0.000px;color:#111">0</div>
<div class="a" style="left:1580px;top:524.69px;width:12px;height:13px;overflow:hidden"><div class="a" style="left:8.50px;top:0;font-size:11px;line-height:13px;color:#111">0</div></div>
<div class="a" style="left:281.00px;top:549.69px;font-size:11px;line-height:13px;letter-spacing:0.000px;color:#111">R</div>
<div class="a" style="left:337.50px;top:549.69px;font-size:11px;line-height:13px;letter-spacing:0.000px;color:#111">9</div>
<div class="a" style="left:442.60px;top:549.69px;font-size:11px;line-height:13px;letter-spacing:-0.101px;color:#111">In attesa di ricambi</div>
<div class="a" style="left:910.88px;top:549.69px;font-size:11px;line-height:13px;letter-spacing:0.000px;color:#111">0</div>
<div class="a" style="left:1183.88px;top:549.69px;font-size:11px;line-height:13px;letter-spacing:0.000px;color:#111">0</div>
<div class="a" style="left:1580px;top:549.69px;width:12px;height:13px;overflow:hidden"><div class="a" style="left:8.50px;top:0;font-size:11px;line-height:13px;color:#111">0</div></div>
<div class="a" style="left:281.00px;top:574.69px;font-size:11px;line-height:13px;letter-spacing:0.000px;color:#111">C</div>
<div class="a" style="left:337.50px;top:574.69px;font-size:11px;line-height:13px;letter-spacing:-0.450px;color:#111">10</div>
<div class="a" style="left:442.60px;top:574.69px;font-size:11px;line-height:13px;letter-spacing:-0.350px;color:#111">Chiuso con successo</div>
<div class="a" style="left:910.88px;top:574.69px;font-size:11px;line-height:13px;letter-spacing:0.000px;color:#111">0</div>
<div class="a" style="left:1183.88px;top:574.69px;font-size:11px;line-height:13px;letter-spacing:0.000px;color:#111">0</div>
<div class="a" style="left:1580px;top:574.69px;width:12px;height:13px;overflow:hidden"><div class="a" style="left:8.50px;top:0;font-size:11px;line-height:13px;color:#111">0</div></div>
<div class="a" style="left:281.00px;top:599.69px;font-size:11px;line-height:13px;letter-spacing:0.000px;color:#111">Z</div>
<div class="a" style="left:337.50px;top:599.69px;font-size:11px;line-height:13px;letter-spacing:-0.450px;color:#111">11</div>
<div class="a" style="left:442.60px;top:599.69px;font-size:11px;line-height:13px;letter-spacing:-0.075px;color:#111">Chiuso/non riparato</div>
<div class="a" style="left:910.88px;top:599.69px;font-size:11px;line-height:13px;letter-spacing:0.000px;color:#111">0</div>
<div class="a" style="left:1183.88px;top:599.69px;font-size:11px;line-height:13px;letter-spacing:0.000px;color:#111">0</div>
<div class="a" style="left:1580px;top:599.69px;width:12px;height:13px;overflow:hidden"><div class="a" style="left:8.50px;top:0;font-size:11px;line-height:13px;color:#111">0</div></div>
<div class="a" style="left:281.00px;top:624.69px;font-size:11px;line-height:13px;letter-spacing:0.000px;color:#111">B</div>
<div class="a" style="left:337.50px;top:624.69px;font-size:11px;line-height:13px;letter-spacing:-0.450px;color:#111">12</div>
<div class="a" style="left:442.60px;top:624.69px;font-size:11px;line-height:13px;letter-spacing:-0.065px;color:#111">Altro</div>
<div class="a" style="left:910.88px;top:624.69px;font-size:11px;line-height:13px;letter-spacing:0.000px;color:#111">0</div>
<div class="a" style="left:1183.88px;top:624.69px;font-size:11px;line-height:13px;letter-spacing:0.000px;color:#111">0</div>
<div class="a" style="left:1580px;top:624.69px;width:12px;height:13px;overflow:hidden"><div class="a" style="left:8.50px;top:0;font-size:11px;line-height:13px;color:#111">0</div></div>
</body></html>
